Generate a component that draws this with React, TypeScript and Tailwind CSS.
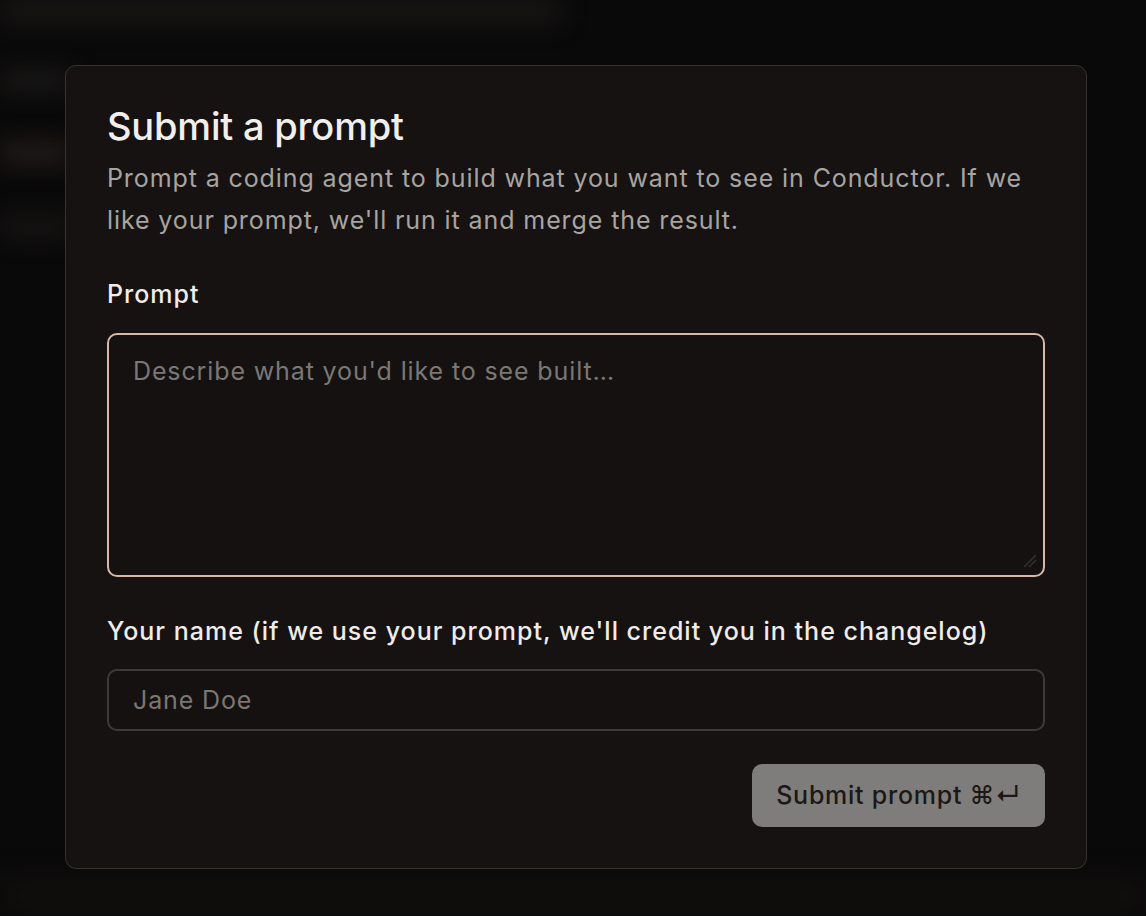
export default function App() {
  return (
    <div
      className="relative w-[1146px] h-[916px] overflow-hidden bg-[#0a0909]"
      style={{ fontFamily: 'Inter, "Noto Sans", sans-serif' }}
    >
      {/* blurred page behind the dialog */}
      <div className="absolute inset-0 blur-md">
        <div className="absolute left-0 top-0 w-[560px] h-[22px] bg-[#1a1918]" />
        <div className="absolute left-0 top-[72px] w-[70px] h-[18px] bg-[#1d1c1b]" />
        <div className="absolute left-0 top-[144px] w-[70px] h-[18px] bg-[#2a2120]" />
        <div className="absolute left-0 top-[218px] w-[70px] h-[18px] bg-[#191817]" />
        <div className="absolute left-0 bottom-0 w-[1146px] h-[40px] bg-[#0f0e0d]" />
      </div>

      <div className="relative ml-[65px] mt-[65px] w-[1022px] h-[804px] rounded-[11px] border border-[#363333] bg-[#151211] px-[41px] pt-[38px] pb-[41px] flex flex-col">
        <h2 className="text-[38px] leading-[44px] font-medium tracking-[-0.005em] text-[#f1efed]">
          Submit a prompt
        </h2>
        <p className="mt-[9px] text-[25px] leading-[42px] tracking-[0.036em] text-[#a8a4a1]">
          Prompt a coding agent to build what you want to see in Conductor. If we like your prompt, we'll run it and
          merge the result.
        </p>

        <label className="mt-[37px] text-[25px] leading-[32px] font-medium tracking-[0.04em] text-[#efece9]">
          Prompt
        </label>
        <div className="relative mt-[23px]">
          <textarea
            placeholder="Describe what you'd like to see built…"
            className="block h-[244px] w-full rounded-[10px] border-2 border-[#d8b7a9] bg-[#141110] px-[24px] pt-[18px] text-[25px] leading-[36px] tracking-[0.035em] text-[#ece9e6] placeholder:text-[#7b7774] outline-none resize-none"
          />
          <svg
            className="absolute right-[8px] bottom-[9px] pointer-events-none"
            width="16"
            height="16"
            viewBox="0 0 16 16"
            fill="none"
            stroke="#34302f"
            strokeWidth="1.6"
          >
            <path d="M3 15 L15 3" />
            <path d="M8 15 L15 8" />
          </svg>
        </div>

        <label className="mt-[38px] text-[25px] leading-[32px] font-medium tracking-[0.04em] text-[#efece9]">
          Your name (if we use your prompt, we'll credit you in the changelog)
        </label>
        <input
          placeholder="Jane Doe"
          className="mt-[22px] h-[62px] w-full rounded-[10px] border-2 border-[#3d3a39] bg-[#141110] px-[24px] text-[25px] tracking-[0.035em] text-[#ece9e6] placeholder:text-[#7b7774] outline-none"
        />

        <div className="mt-[33px] flex justify-end">
          <button className="h-[63px] w-[293px] rounded-[10px] bg-[#7f7d7b] text-[25px] font-medium tracking-[0.03em] text-[#1b1817]">
            Submit prompt ⌘↵
          </button>
        </div>
      </div>
    </div>
  );
}
